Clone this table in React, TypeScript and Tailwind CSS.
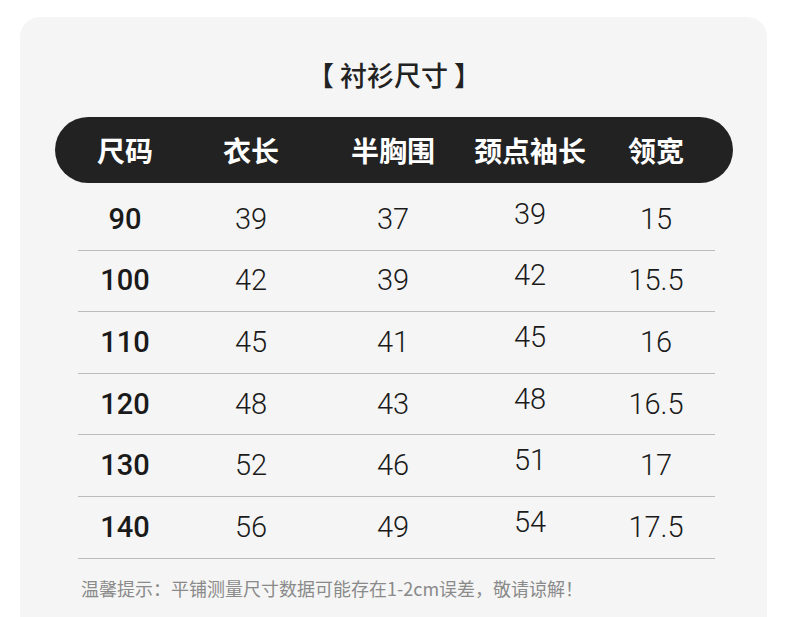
const ROWS: [string, string, string, string, string][] = [
  ['90', '39', '37', '39', '15'],
  ['100', '42', '39', '42', '15.5'],
  ['110', '45', '41', '45', '16'],
  ['120', '48', '43', '48', '16.5'],
  ['130', '52', '46', '51', '17'],
  ['140', '56', '49', '54', '17.5'],
];

const HEADERS = ['尺码', '衣长', '半胸围', '颈点袖长', '领宽'];

const cjk = "font-['Noto_Sans_CJK_SC','Noto_Sans',sans-serif]";
const num = "font-['Roboto','Liberation_Sans',sans-serif]";
const cols = 'grid grid-cols-[140px_112px_172px_102px_150px]';

export default function App() {
  return (
    <div className="min-h-[617px] bg-white pt-[17px] pl-[20px]">
      <div className={`w-[747px] h-[600px] rounded-t-[20px] bg-[#f5f5f5] pt-[40px] pl-[35px] pr-[34px] ${cjk}`}>
        <h1 className="text-center text-[27px] font-medium leading-[36px] text-[#222]">【 衬衫尺寸 】</h1>

        <div className={`${cols} mt-[24px] h-[66px] items-center rounded-full bg-[#222] text-white`}>
          {HEADERS.map((h) => (
            <div key={h} className="flex justify-center whitespace-nowrap text-[28px] font-bold leading-none">
              {h}
            </div>
          ))}
        </div>

        <div className="mt-[6px]">
          {ROWS.map((row) => (
            <div key={row[0]}>
              <div className={`${cols} h-[60.6px] items-center text-[#1a1a1a] ${num}`}>
                {row.map((v, i) => (
                  <div
                    key={i}
                    className={`text-center text-[29px] leading-none ${i === 0 ? 'font-medium' : 'font-light'} ${i === 3 ? 'pb-[10px]' : ''}`}
                  >
                    {v}
                  </div>
                ))}
              </div>
              <div className="ml-[23px] mr-[18px] h-px bg-[#bcbcbc]" />
            </div>
          ))}
        </div>

        <p className="mt-[17px] ml-[26px] text-[18px] leading-[24px] text-[#8a8a8a]">
          温馨提示：平铺测量尺寸数据可能存在1-2cm误差，敬请谅解！
        </p>
      </div>
    </div>
  );
}
